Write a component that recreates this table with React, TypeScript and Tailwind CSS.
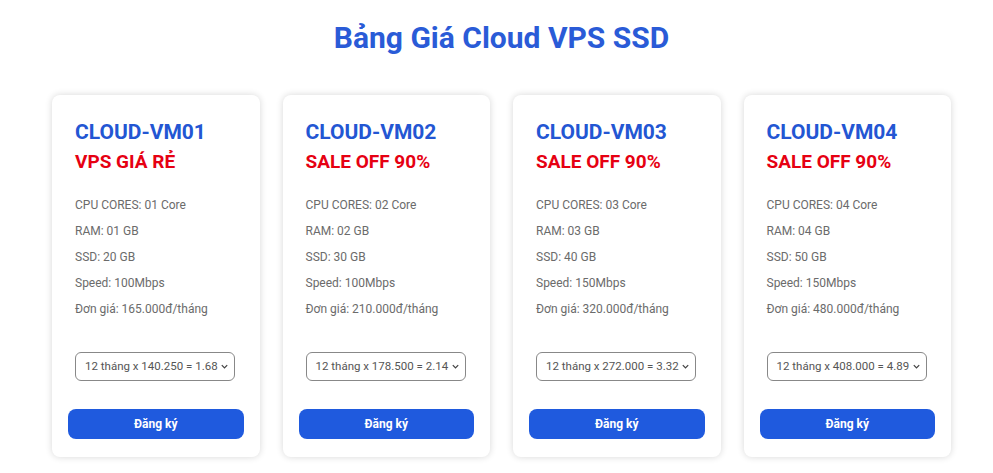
const plans = [
  { name: "CLOUD-VM01", tag: "VPS GIÁ RẺ", cpu: "01", ram: "01", ssd: "20", speed: "100", price: "165.000", option: "12 tháng x 140.250 = 1.68" },
  { name: "CLOUD-VM02", tag: "SALE OFF 90%", cpu: "02", ram: "02", ssd: "30", speed: "100", price: "210.000", option: "12 tháng x 178.500 = 2.14" },
  { name: "CLOUD-VM03", tag: "SALE OFF 90%", cpu: "03", ram: "03", ssd: "40", speed: "150", price: "320.000", option: "12 tháng x 272.000 = 3.32" },
  { name: "CLOUD-VM04", tag: "SALE OFF 90%", cpu: "04", ram: "04", ssd: "50", speed: "150", price: "480.000", option: "12 tháng x 408.000 = 4.89" },
];

function PlanCard({ plan }: { plan: (typeof plans)[number] }) {
  return (
    <div className="bg-white rounded-lg shadow-[0_0_7px_rgba(0,0,0,0.16)] px-4 pt-[25px] pb-[18px] flex flex-col">
      <div className="pl-[7px]">
        <h3 className="text-[21px] leading-[25px] font-bold text-[#2356d3]">{plan.name}</h3>
        <p className="mt-[5px] text-[19px] leading-[23px] font-bold text-[#e60012]">{plan.tag}</p>
        <ul className="mt-[19px] text-[12px] leading-[26px] text-[#6b6b6b]">
          <li>CPU CORES: {plan.cpu} Core</li>
          <li>RAM: {plan.ram} GB</li>
          <li>SSD: {plan.ssd} GB</li>
          <li>Speed: {plan.speed}Mbps</li>
          <li>Đơn giá: {plan.price}đ/tháng</li>
        </ul>
        <div className="mt-[30px] w-[160px] h-[29px] border border-[#888] rounded-md flex items-center pl-[9px] pr-[5px] text-[11.5px] text-[#555]">
          <span className="flex-1 whitespace-nowrap">{plan.option}</span>
          <svg width="9" height="9" viewBox="0 0 10 10" className="shrink-0">
            <path d="M2 3.5 L5 6.5 L8 3.5" fill="none" stroke="#444" strokeWidth="1.4" />
          </svg>
        </div>
      </div>
      <button className="mt-[28px] h-[30px] w-full rounded-lg bg-[#1f5ade] text-white text-[12px] font-bold">
        Đăng ký
      </button>
    </div>
  );
}

export default function App() {
  return (
    <div className="min-h-[473px] bg-white pl-[52px] pr-[42px] pt-[19px]" style={{ fontFamily: "Roboto, 'Noto Sans', sans-serif" }}>
      <h1 className="text-center text-[30px] leading-[38px] font-bold text-[#2a5bd7]">Bảng Giá Cloud VPS SSD</h1>
      <div className="mt-[38px] grid grid-cols-4 gap-[23px]">
        {plans.map((p) => (
          <PlanCard key={p.name} plan={p} />
        ))}
      </div>
    </div>
  );
}
